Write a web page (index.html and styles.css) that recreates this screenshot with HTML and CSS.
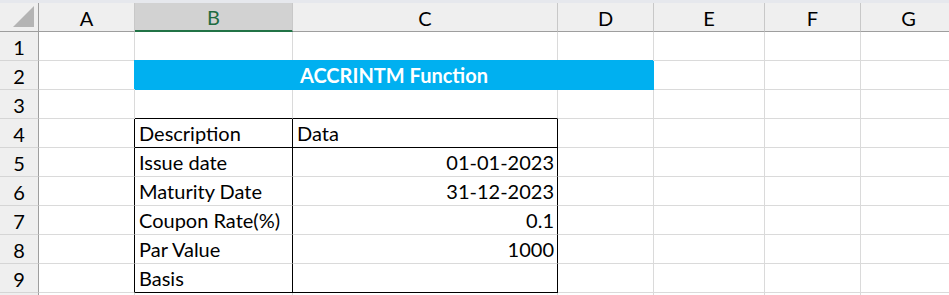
FILE: index.html
```html
<!DOCTYPE html>
<html lang="en">
<head>
    <meta charset="UTF-8">
    <title>ACCRINTM Function</title>
    <link rel="stylesheet" href="styles.css">
</head>

<body>
<div class="ribbon-edge"></div>
<div class="sheet">
    <!-- column headers -->
    <div class="corner">
        <svg width="22" height="22" viewBox="0 0 22 22"><polygon points="21,0 21,21 0,21" fill="#b4b4b4"/></svg>
    </div>
    <div class="col-head">A</div>
    <div class="col-head active">B</div>
    <div class="col-head">C</div>
    <div class="col-head">D</div>
    <div class="col-head">E</div>
    <div class="col-head">F</div>
    <div class="col-head">G</div>

    <!-- row 1 -->
    <div class="row-head">1</div>
    <div class="cell"></div><div class="cell"></div><div class="cell"></div><div class="cell"></div><div class="cell"></div><div class="cell"></div><div class="cell"></div>

    <!-- row 2 -->
    <div class="row-head">2</div>
    <div class="cell"></div>
    <div class="cell title">ACCRINTM Function</div>
    <div class="cell"></div><div class="cell"></div><div class="cell"></div>

    <!-- row 3 -->
    <div class="row-head">3</div>
    <div class="cell"></div><div class="cell bk-b"></div><div class="cell bk-b"></div><div class="cell"></div><div class="cell"></div><div class="cell"></div><div class="cell"></div>

    <!-- row 4 -->
    <div class="row-head">4</div>
    <div class="cell bk-r"></div>
    <div class="cell bk-r bk-b">Description</div>
    <div class="cell bk-r bk-b">Data</div>
    <div class="cell"></div><div class="cell"></div><div class="cell"></div><div class="cell"></div>

    <!-- row 5 -->
    <div class="row-head">5</div>
    <div class="cell bk-r"></div>
    <div class="cell bk-r">Issue date</div>
    <div class="cell bk-r num">01-01-2023</div>
    <div class="cell"></div><div class="cell"></div><div class="cell"></div><div class="cell"></div>

    <!-- row 6 -->
    <div class="row-head">6</div>
    <div class="cell bk-r"></div>
    <div class="cell bk-r">Maturity Date</div>
    <div class="cell bk-r num">31-12-2023</div>
    <div class="cell"></div><div class="cell"></div><div class="cell"></div><div class="cell"></div>

    <!-- row 7 -->
    <div class="row-head">7</div>
    <div class="cell bk-r"></div>
    <div class="cell bk-r">Coupon Rate(%)</div>
    <div class="cell bk-r num">0.1</div>
    <div class="cell"></div><div class="cell"></div><div class="cell"></div><div class="cell"></div>

    <!-- row 8 -->
    <div class="row-head">8</div>
    <div class="cell bk-r"></div>
    <div class="cell bk-r">Par Value</div>
    <div class="cell bk-r num">1000</div>
    <div class="cell"></div><div class="cell"></div><div class="cell"></div><div class="cell"></div>

    <!-- row 9 -->
    <div class="row-head">9</div>
    <div class="cell bk-r"></div>
    <div class="cell bk-r bk-b">Basis</div>
    <div class="cell bk-r bk-b"></div>
    <div class="cell"></div><div class="cell"></div><div class="cell"></div><div class="cell"></div>

    <!-- row 10, only its top edge is in view -->
    <div class="row-head"></div>
    <div class="cell"></div><div class="cell"></div><div class="cell"></div><div class="cell"></div><div class="cell"></div><div class="cell"></div><div class="cell"></div>
</div>
</body>
</html>
```

FILE: styles.css
```css
html, body{margin: 0; padding: 0; overflow: hidden; background: #fff}
body{font-family: Lato, "Liberation Sans", sans-serif; font-size: 20px; color: #000}
*{box-sizing: border-box}

.ribbon-edge{height: 3px; background: #e6e8ed}

.sheet{display: grid; grid-template-columns: 39px 96px 158px 265px 96px 111px 96px 96px; grid-auto-rows: 29px; width: 957px}

.corner, .col-head, .row-head{background: #efefef; border-right: 1px solid #c8c8c8; border-bottom: 1px solid #c8c8c8}
.corner{display: flex; align-items: flex-end; justify-content: flex-end; padding: 0 3px 3px 0; border-right-color: #9e9e9e; border-bottom-color: #9e9e9e}
.corner svg{display: block}
.col-head{display: flex; align-items: center; justify-content: center; border-bottom-color: #9e9e9e; padding-top: 1px}
.col-head.active{background: #d2d2d2; color: #1e6b41; border-bottom: 2px solid #217346}
.row-head{display: flex; align-items: center; justify-content: center; border-right-color: #9e9e9e; border-bottom-color: #d5d5d5; padding-top: 1px}

.cell{border-right: 1px solid #dadada; border-bottom: 1px solid #dadada; padding: 0 4px; line-height: 28px; white-space: nowrap; overflow: hidden}
.cell.num{text-align: right; padding-right: 3px}
.cell.bk-r{border-right-color: #000}
.cell.bk-b{border-bottom-color: #000}

.title{grid-column: span 3; background: #00b0f0; border-right-color: #00b0f0; border-bottom-color: #00b0f0; box-shadow: -1px -1px 0 #00b0f0; color: #fff; font-weight: bold; text-align: center}
```
